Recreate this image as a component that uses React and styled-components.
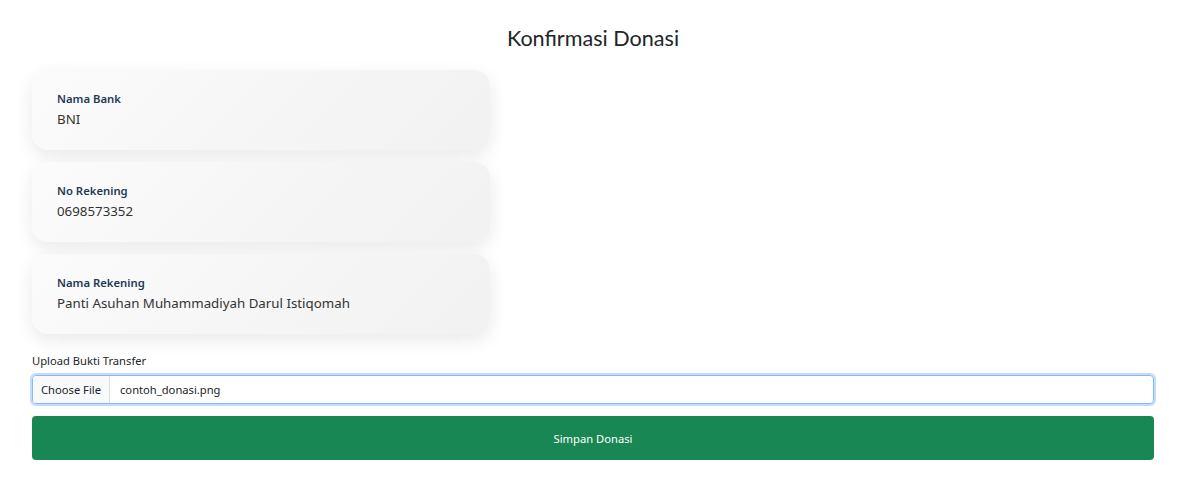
import React from 'react'
import styled, { createGlobalStyle } from 'styled-components'

const Global = createGlobalStyle`
    body {
        margin: 0;
        background: #fff;
        font-family: "Noto Sans", "Open Sans", sans-serif;
        color: #212529;
    }
`

const fields = [
    { label: 'Nama Bank', value: 'BNI' },
    { label: 'No Rekening', value: '0698573352' },
    { label: 'Nama Rekening', value: 'Panti Asuhan Muhammadiyah Darul Istiqomah' },
]

const App = () => {
    return (
        <S.Page>
            <Global />
            <S.Title>Konfirmasi Donasi</S.Title>
            <S.Cards>
                {fields.map(f => (
                    <S.Card key={f.label}>
                        <S.Label>{f.label}</S.Label>
                        <S.Value>{f.value}</S.Value>
                    </S.Card>
                ))}
            </S.Cards>
            <S.UploadLabel>Upload Bukti Transfer</S.UploadLabel>
            <S.FileInput>
                <S.ChooseBtn>Choose File</S.ChooseBtn>
                <S.FileName>contoh_donasi.png</S.FileName>
            </S.FileInput>
            <S.Submit>Simpan Donasi</S.Submit>
        </S.Page>
    )
}

const S = {
    Page: styled.div`
        display: flex;
        flex-direction: column;
        padding: 25px 48px 0 32px;
    `,
    Title: styled.h1`
        margin: 0 0 19px 0;
        text-align: center;
        font-family: "Lato", "Open Sans", sans-serif;
        font-weight: 400;
        font-size: 21.6px;
        line-height: 26px;
        color: #212529;
    `,
    Cards: styled.div`
        display: flex;
        flex-direction: column;
        gap: 12px;
        width: 458px;
    `,
    Card: styled.div`
        display: flex;
        flex-direction: column;
        justify-content: center;
        height: 80px;
        box-sizing: border-box;
        padding: 0 25px;
        border-radius: 16px;
        background: linear-gradient(135deg, #fbfbfb 0%, #f1f1f1 100%);
        box-shadow: 0 6px 18px rgba(0, 0, 0, 0.09);
    `,
    Label: styled.div`
        font-size: 11.3px;
        font-weight: 600;
        line-height: 16px;
        color: #1e3a56;
    `,
    Value: styled.div`
        font-size: 13.3px;
        line-height: 20px;
        margin-top: 2px;
        color: #333;
    `,
    UploadLabel: styled.div`
        margin-top: 19px;
        font-size: 11.2px;
        line-height: 16px;
        color: #212529;
    `,
    FileInput: styled.div`
        display: flex;
        align-items: stretch;
        margin-top: 6px;
        height: 27px;
        border: 1px solid #86b7fe;
        border-radius: 4px;
        box-shadow: 0 0 0 2px rgba(13, 110, 253, 0.25);
        overflow: hidden;
        font-size: 11.2px;
    `,
    ChooseBtn: styled.div`
        display: flex;
        align-items: center;
        padding: 0 8px;
        background: #f8f9fa;
        border-right: 1px solid #dee2e6;
        color: #212529;
    `,
    FileName: styled.div`
        display: flex;
        align-items: center;
        padding: 0 10px;
        color: #212529;
    `,
    Submit: styled.button`
        margin-top: 12px;
        height: 44px;
        border: none;
        border-radius: 4px;
        background: #198754;
        color: #fff;
        font-family: "Noto Sans", sans-serif;
        font-size: 11.2px;
    `,
}

export default App
